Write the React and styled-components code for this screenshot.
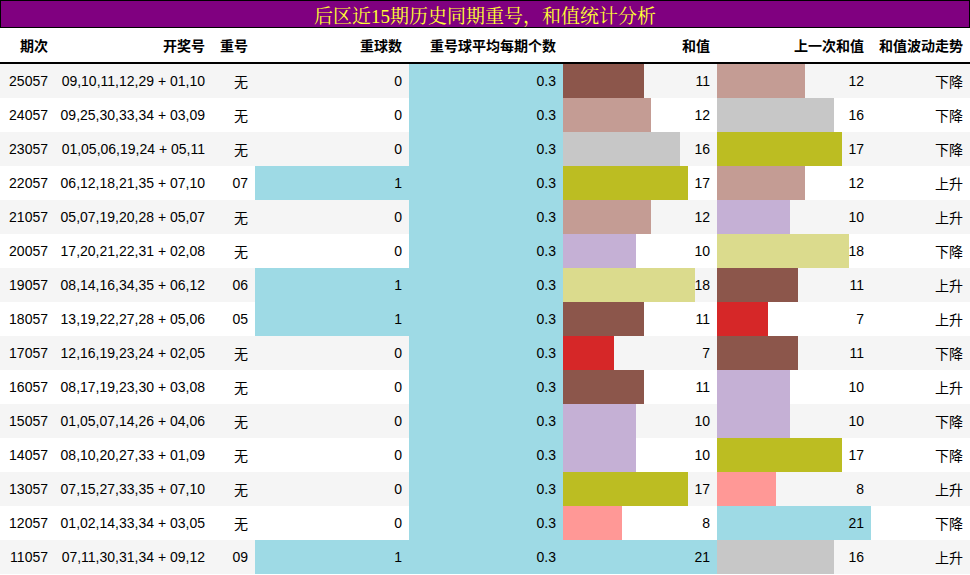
import React from "react";
import styled, { createGlobalStyle } from "styled-components";

const G = createGlobalStyle`
  body { margin: 0; background: #fff; font-family: "Liberation Sans", "Noto Sans CJK SC", sans-serif; }
`;
const cols = "55px 157px 43px 154px 154px 154px 154px 99px";
const Wrap = styled.div`width: 970px;`;
const Title = styled.div`
  height: 26px; background: #800080; border: 1px solid #000; color: #ffff33;
  font-family: "Liberation Serif", "Noto Serif CJK SC", "Noto Sans CJK SC", serif;
  font-size: 19px; display: flex; align-items: center; justify-content: center;
`;
const Head = styled.div`
  display: grid; grid-template-columns: ${cols}; height: 34px;
  border-bottom: 2px solid #000; font-weight: bold; font-size: 14px; color: #000;
`;
const Row = styled.div`
  display: grid; grid-template-columns: ${cols}; height: 34px; font-size: 14px;
  background: ${p => (p.$odd ? "#fff" : "#f5f5f5")}; color: #000;
`;
const Cell = styled.div`
  position: relative; display: flex; align-items: center; justify-content: flex-end;
  padding-right: 7px;
`;
const Bar = styled.div`
  position: absolute; left: 0; top: 0; bottom: 0; background: ${p => p.$c};
`;
const Txt = styled.span`position: relative;`;

const colors = { 7: "#d62728", 8: "#ff9896", 10: "#c5b0d5", 11: "#8c564b", 12: "#c49c94", 16: "#c7c7c7", 17: "#bcbd22", 18: "#dbdb8d", 21: "#9edae5" };
const data = [
  ["25057","09,10,11,12,29 + 01,10","无",0,11,12,"下降"],
  ["24057","09,25,30,33,34 + 03,09","无",0,12,16,"下降"],
  ["23057","01,05,06,19,24 + 05,11","无",0,16,17,"下降"],
  ["22057","06,12,18,21,35 + 07,10","07",1,17,12,"上升"],
  ["21057","05,07,19,20,28 + 05,07","无",0,12,10,"上升"],
  ["20057","17,20,21,22,31 + 02,08","无",0,10,18,"下降"],
  ["19057","08,14,16,34,35 + 06,12","06",1,18,11,"上升"],
  ["18057","13,19,22,27,28 + 05,06","05",1,11,7,"上升"],
  ["17057","12,16,19,23,24 + 02,05","无",0,7,11,"下降"],
  ["16057","08,17,19,23,30 + 03,08","无",0,11,10,"上升"],
  ["15057","01,05,07,14,26 + 04,06","无",0,10,10,"下降"],
  ["14057","08,10,20,27,33 + 01,09","无",0,10,17,"下降"],
  ["13057","07,15,27,33,35 + 07,10","无",0,17,8,"上升"],
  ["12057","01,02,14,33,34 + 03,05","无",0,8,21,"下降"],
  ["11057","07,11,30,31,34 + 09,12","09",1,21,16,"上升"],
];
const heads = ["期次","开奖号","重号","重球数","重号球平均每期个数","和值","上一次和值","和值波动走势"];

export default function App() {
  return (
    <Wrap>
      <G />
      <Title>后区近15期历史同期重号，和值统计分析</Title>
      <Head>{heads.map(h => <Cell key={h}>{h}</Cell>)}</Head>
      {data.map((d, i) => (
        <Row key={d[0]} $odd={i % 2 === 1}>
          <Cell>{d[0]}</Cell>
          <Cell>{d[1]}</Cell>
          <Cell>{d[2]}</Cell>
          <Cell>{d[3] ? <Bar $c="#9edae5" style={{ width: "100%" }} /> : null}<Txt>{d[3]}</Txt></Cell>
          <Cell><Bar $c="#9edae5" style={{ width: "100%" }} /><Txt>0.3</Txt></Cell>
          <Cell><Bar $c={colors[d[4]]} style={{ width: `${(d[4] / 21) * 100}%` }} /><Txt>{d[4]}</Txt></Cell>
          <Cell><Bar $c={colors[d[5]]} style={{ width: `${(d[5] / 21) * 100}%` }} /><Txt>{d[5]}</Txt></Cell>
          <Cell>{d[6]}</Cell>
        </Row>
      ))}
    </Wrap>
  );
}
